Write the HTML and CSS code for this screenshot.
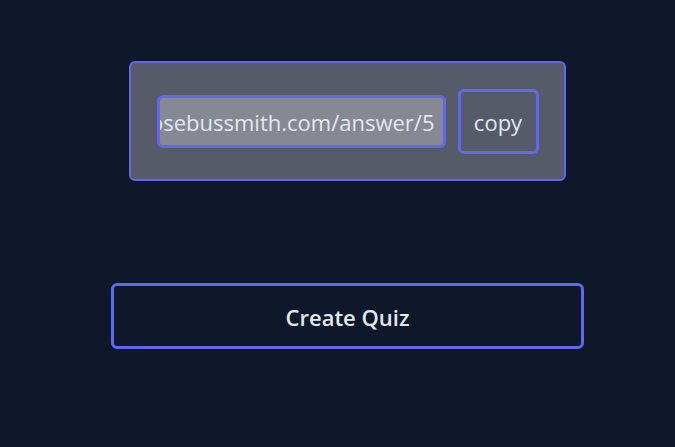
FILE: index.html
```html
<!DOCTYPE html>
<html lang="en">
<head>
<meta charset="utf-8">
<link rel="stylesheet" href="styles.css">
<title>Quiz</title>
</head>
<body>
<main class="page">
  <section class="share-card">
    <div class="link-field"><span class="link-text">https://www.josebussmith.com/answer/5</span></div>
    <button class="copy-btn" type="button">copy</button>
  </section>
  <button class="create-btn" type="button">Create Quiz</button>
</main>
</body>
</html>
```

FILE: styles.css
```css
* { box-sizing: border-box; }
html, body {
  margin: 0;
  padding: 0;
  background: #0f172a;
  height: 100%;
}
body {
  font-family: "Open Sans", "Noto Sans", sans-serif;
  color: #e2e8f0;
}
.page {
  display: flex;
  flex-direction: column;
  align-items: center;
  padding: 61px 0 0 20px;
}
.share-card {
  width: 437px;
  height: 120px;
  border: 2px solid #6366f1;
  border-radius: 6px;
  background: #555b68;
  display: flex;
  align-items: center;
  justify-content: center;
  gap: 12px;
  padding: 0 25px;
}
.link-field {
  width: 289px;
  height: 53px;
  border: 3px solid #6366f1;
  border-radius: 6px;
  background: #868993;
  display: flex;
  align-items: center;
  justify-content: flex-end;
  overflow: hidden;
  white-space: nowrap;
  padding: 1px 8px 0;
}
.link-text {
  font-size: 22px;
  color: #e2e8f0;
  flex-shrink: 0;
}
.copy-btn {
  width: 81px;
  height: 65px;
  border: 3px solid #6366f1;
  border-radius: 6px;
  background: transparent;
  color: #e2e8f0;
  font-family: inherit;
  font-size: 22px;
  padding: 2px 0 0;
}
.create-btn {
  margin-top: 102px;
  width: 473px;
  height: 66px;
  border: 3px solid #6366f1;
  border-radius: 6px;
  background: transparent;
  color: #e2e8f0;
  font-family: inherit;
  font-weight: 600;
  font-size: 22px;
  padding: 2px 0 0;
}
```
